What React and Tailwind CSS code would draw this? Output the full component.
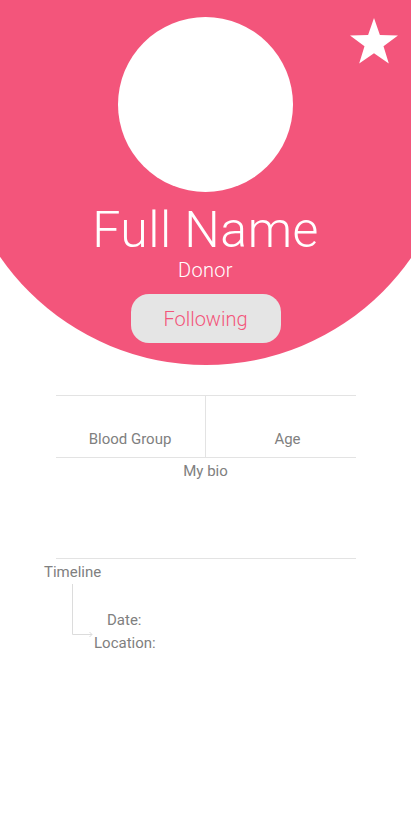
import React from 'react';

const Star = () => (
    <svg width="48" height="46" viewBox="0 0 48 46" className="fill-white">
        <polygon points="24,0 29.9,17.1 48,17.4 33.5,28.3 38.8,45.6 24,35.2 9.2,45.6 14.5,28.3 0,17.4 18.1,17.1" />
    </svg>
);

const App = () => {
    return (
        <div className="min-h-screen bg-white overflow-hidden font-['Roboto',sans-serif] text-[#808080]">
            {/* Header */}
            <div className="relative h-[366px] flex justify-center">
                <div className="absolute -top-[135px] left-1/2 -translate-x-1/2 w-[500px] h-[500px] rounded-full bg-[#f3557b]"></div>
                <div className="absolute top-[18px] right-[13px]">
                    <Star />
                </div>
                <div className="relative flex flex-col items-center pt-[17px]">
                    <div className="w-[175px] h-[175px] rounded-full bg-white"></div>
                    <h1 className="mt-[13px] text-[50px] leading-[50px] font-light tracking-[0.5px] text-white">Full Name</h1>
                    <p className="mt-[5px] text-[20px] leading-[20px] font-light tracking-[0.3px] text-white">Donor</p>
                    <button className="mt-[14px] w-[150px] h-[49px] rounded-[18px] bg-[#e5e5e5] text-[20px] font-light text-[#f3557b]">
                        Following
                    </button>
                </div>
            </div>

            {/* Stats */}
            <div className="w-[300px] mx-auto mt-[29px]">
                <div className="grid grid-cols-2 h-[63px] border-y border-[#e3e3e3]">
                    <div className="flex items-end justify-center pb-[8px] border-r border-[#e3e3e3] text-[15px] leading-[20px]">Blood Group</div>
                    <div className="flex items-end justify-center pb-[8px] pl-[14px] text-[15px] leading-[20px]">Age</div>
                </div>
                <div className="h-[101px] border-b border-[#e3e3e3] pt-[3px] text-center text-[15px] leading-[20px]">My bio</div>
            </div>

            {/* Timeline */}
            <div className="pl-[44px] pt-[3px]">
                <p className="text-[15px] leading-[20px]">Timeline</p>
                <div className="flex">
                    <svg width="24" height="54" viewBox="0 0 24 54" className="ml-[27px] mt-[2px] shrink-0">
                        <path d="M1.5 0 V50.5 H21" stroke="#dcdcdc" strokeWidth="1" fill="none" />
                        <path d="M18.5 48 L21 50.5 L18.5 53" stroke="#dcdcdc" strokeWidth="1" fill="none" />
                    </svg>
                    <div className="flex flex-col pt-[27px] text-[15px] leading-[23px]">
                        <span className="pl-[12px]">Date:</span>
                        <span className="-ml-[1px]">Location:</span>
                    </div>
                </div>
            </div>
        </div>
    );
};

export default App;
